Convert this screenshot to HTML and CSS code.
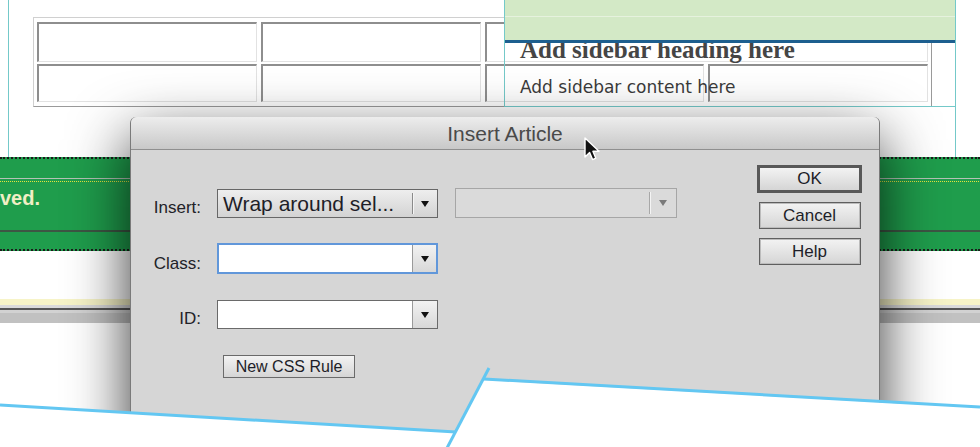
FILE: index.html
```html
<!DOCTYPE html>
<html lang="en">
<head>
<meta charset="utf-8">
<title>Insert Article</title>
<link rel="stylesheet" href="styles.css">
</head>
<body>
<div class="stage">
  <div class="page">
    <div class="tbl">
      <div class="cell"></div>
      <div class="cell"></div>
      <div class="cell span2"></div>
      <div class="cell"></div>
      <div class="cell"></div>
      <div class="cell"></div>
      <div class="cell"></div>
    </div>
    <div class="sidebar">
      <div class="sb-head"></div>
      <div class="sb-title">Add sidebar heading here</div>
      <div class="sb-text">Add sidebar content here</div>
    </div>
  </div>

  <div class="band">
    <div class="band-text">ved.</div>
  </div>
  <div class="gap"></div>
  <div class="stripes">
    <div class="st-yellow"></div>
    <div class="st-light"></div>
    <div class="st-dark"></div>
    <div class="st-light2"></div>
    <div class="st-gray"></div>
  </div>

  <div class="dialog">
    <div class="dlg-title">Insert Article</div>
    <div class="dlg-body">
      <div class="form">
        <div class="row row1">
          <div class="lbl">Insert:</div>
          <div class="popup">
            <div class="val">Wrap around sel...</div>
            <div class="sep"></div>
            <div class="arr"></div>
          </div>
          <div class="popup dis">
            <div class="val"></div>
            <div class="sep"></div>
            <div class="arr"></div>
          </div>
        </div>
        <div class="row row2">
          <div class="lbl">Class:</div>
          <div class="combo focus">
            <div class="field"></div>
            <div class="sep"></div>
            <div class="arr"></div>
          </div>
        </div>
        <div class="row row3">
          <div class="lbl">ID:</div>
          <div class="combo">
            <div class="field"></div>
            <div class="sep"></div>
            <div class="arr"></div>
          </div>
        </div>
        <div class="row row4">
          <div class="lbl"></div>
          <div class="btn rule">New CSS Rule</div>
        </div>
      </div>
      <div class="actions">
        <div class="btn def">OK</div>
        <div class="btn act">Cancel</div>
        <div class="btn act">Help</div>
      </div>
    </div>
  </div>

  <svg class="torn" width="980" height="447" viewBox="0 0 980 447">
    <polygon points="0,406 456,432 483,380 980,408 980,447 0,447" fill="#ffffff"/>
    <line x1="0" y1="405" x2="456" y2="432" stroke="#63c7f2" stroke-width="3"/>
    <line x1="447" y1="448" x2="489" y2="368" stroke="#63c7f2" stroke-width="3"/>
    <line x1="484" y1="379" x2="980" y2="407" stroke="#63c7f2" stroke-width="3"/>
  </svg>

  <svg class="cursor" width="20" height="28" viewBox="0 0 20 28">
    <path d="M2 2 L2 21 L6.6 16.4 L9.6 23.6 L12.8 22.2 L9.9 15.3 L16 15.3 Z" fill="#111" stroke="#fff" stroke-width="1.4" stroke-linejoin="round"/>
  </svg>
</div>
</body>
</html>
```
FILE: styles.css
```css
html, body {
  margin: 0;
  padding: 0;
  background: #ffffff;
}
body {
  font-family: "Liberation Sans", Arial, sans-serif;
}
.stage {
  position: relative;
  width: 980px;
  height: 447px;
  overflow: hidden;
  background: #ffffff;
}

/* background page */
.page {
  box-sizing: border-box;
  margin-left: 8px;
  width: 948px;
  height: 157px;
  border-left: 1px solid #74c9c9;
  border-right: 1px solid #74c9c9;
  display: grid;
  grid-template-columns: 1fr;
  grid-template-rows: 157px;
}
.tbl {
  grid-area: 1 / 1;
  align-self: start;
  justify-self: start;
  margin: 17px 0 0 24px;
  display: grid;
  grid-template-columns: 220px 220px 219px 220px;
  grid-template-rows: 40px 38px;
  column-gap: 4px;
  row-gap: 2px;
  padding: 4px 3px;
  border: 1px solid;
  border-color: #d0d0d0 #9a9a9a #9a9a9a #d0d0d0;
}
.cell {
  box-sizing: border-box;
  border-top: 2px solid #8e8e8e;
  border-left: 2px solid #8e8e8e;
  border-right: 1px solid #e2e2e2;
  border-bottom: 1px solid #e2e2e2;
}
.span2 {
  grid-column: span 2;
}
.sidebar {
  grid-area: 1 / 1;
  justify-self: end;
  align-self: start;
  width: 450px;
  height: 106px;
  border-left: 1px solid #74c9c9;
  border-bottom: 1px solid #74c9c9;
}
.sb-head {
  position: relative;
  z-index: 1;
  height: 40px;
  border-bottom: 3px solid #1d5f8f;
  background: linear-gradient(to bottom, #d3e9c6 0, #d3e9c6 16px, #e6f2de 16px, #e6f2de 17px, #d3e9c6 17px, #d3e9c6 100%);
}
.sb-title {
  margin-top: -6px;
  padding-left: 15px;
  font-family: "Liberation Serif", "Times New Roman", serif;
  font-weight: bold;
  font-size: 25px;
  line-height: 25px;
  color: #454545;
  white-space: nowrap;
}
.sb-text {
  margin-top: 15px;
  padding-left: 15px;
  font-family: "DejaVu Sans", Verdana, sans-serif;
  font-size: 17px;
  line-height: 20px;
  color: #3b3b3b;
  white-space: nowrap;
}

/* green band: 157..251 */
.band {
  box-sizing: border-box;
  height: 94px;
  padding-top: 28px;
  border-top: 2px dotted #1b1b1b;
  border-bottom: 2px dotted #1b1b1b;
  background:
    linear-gradient(#3d5644, #3d5644) 0 71px / 100% 2px no-repeat,
    linear-gradient(#b4c2b6, #b4c2b6) 0 19px / 100% 1px no-repeat,
    repeating-linear-gradient(to right, #e6e43c 0, #e6e43c 1px, #1f9d4c 1px, #1f9d4c 2px) 0 22px / 100% 1px no-repeat,
    #1f9d4c;
}
.band-text {
  font-weight: bold;
  font-size: 20px;
  line-height: 22px;
  color: #f1efc5;
}
.gap {
  height: 48px;
  background: #ffffff;
}
.st-yellow { height: 6px; background: #f7f4c8; }
.st-light { height: 3px; background: #dadada; }
.st-dark { height: 2px; background: #565656; }
.st-light2 { height: 3px; background: #d2d2d2; }
.st-gray { height: 10px; background: #c1c1c1; }

/* dialog */
.dialog {
  position: absolute;
  left: 130px;
  top: 117px;
  width: 748px;
  height: 340px;
  border-left: 1px solid #7a7a7a;
  border-right: 1px solid #7a7a7a;
  border-radius: 6px 6px 0 0;
  background: #d6d6d6;
  box-shadow: 0 22px 60px rgba(0, 0, 0, 0.8);
}
.dlg-title {
  height: 30px;
  padding-top: 2px;
  border-bottom: 1px solid #8f8f8f;
  border-radius: 6px 6px 0 0;
  background: linear-gradient(to bottom, #ededed, #c8c8c8);
  display: flex;
  align-items: center;
  justify-content: center;
  font-size: 21px;
  color: #4a4a4a;
}
.dlg-body {
  display: flex;
}
.form {
  padding-top: 38px;
  display: flex;
  flex-direction: column;
}
.row {
  display: grid;
  grid-template-columns: 70px 221px 222px;
  column-gap: 16px;
  align-items: end;
}
.row1 { height: 30px; }
.row2 { height: 31px; margin-top: 25px; }
.row3 { height: 29px; margin-top: 26px; }
.row4 { height: 23px; margin-top: 26px; }
.lbl {
  text-align: right;
  font-size: 17px;
  line-height: 18px;
  color: #222228;
  margin-bottom: 1px;
}
.popup {
  box-sizing: border-box;
  height: 29px;
  border: 1px solid #676767;
  background: linear-gradient(to bottom, #eeeeee, #d3d3d3);
  display: flex;
}
.val {
  flex: 1;
  padding-left: 5px;
  display: flex;
  align-items: center;
  font-size: 21px;
  color: #1e1e28;
  white-space: nowrap;
  overflow: hidden;
}
.sep {
  width: 1px;
  margin: 3px 0;
  background: #8a8a8a;
  box-shadow: 1px 0 0 #f4f4f4;
}
.arr {
  width: 24px;
  display: flex;
  align-items: center;
  justify-content: center;
}
.arr::before {
  content: "";
  width: 0;
  height: 0;
  border-left: 4px solid transparent;
  border-right: 4px solid transparent;
  border-top: 6px solid #111;
}
.popup.dis {
  width: 222px;
  height: 30px;
  margin-left: 1px;
  border-color: #a6a6a6;
  background: #dadada;
}
.popup.dis .sep {
  background: #a8a8a8;
}
.popup.dis .arr {
  width: 26px;
}
.popup.dis .arr::before {
  border-top-color: #7a7a7a;
}
.combo {
  box-sizing: border-box;
  height: 29px;
  border: 1px solid #6a6a6a;
  background: #ffffff;
  display: flex;
}
.combo.focus {
  height: 31px;
  border: 2px solid #6197da;
}
.combo.focus .arr {
  width: 23px;
}
.field {
  flex: 1;
}
.combo .sep {
  margin: 0;
  background: #9a9a9a;
  box-shadow: none;
}
.combo .arr {
  background: linear-gradient(to bottom, #f2f2f2, #d8d8d8);
}
.btn {
  box-sizing: border-box;
  display: flex;
  align-items: center;
  justify-content: center;
  background: linear-gradient(to bottom, #f3f3f3, #d5d5d5);
  color: #1e1e28;
  white-space: nowrap;
}
.btn.rule {
  width: 132px;
  height: 23px;
  margin-left: 6px;
  border: 1px solid #6a6a6a;
  font-size: 16px;
}
.actions {
  margin-left: auto;
  padding: 15px 17px 0 0;
  display: flex;
  flex-direction: column;
  align-items: center;
  gap: 9px;
}
.btn.def {
  width: 105px;
  height: 28px;
  border: 3px solid #585858;
  font-size: 17px;
}
.btn.act {
  width: 102px;
  height: 27px;
  border: 1px solid #5f5f5f;
  box-shadow: inset 0 0 0 1px #bcbcbc;
  font-size: 17px;
}

/* overlays */
.torn {
  position: absolute;
  left: 0;
  top: 0;
}
.cursor {
  position: absolute;
  left: 583px;
  top: 136px;
}
```
